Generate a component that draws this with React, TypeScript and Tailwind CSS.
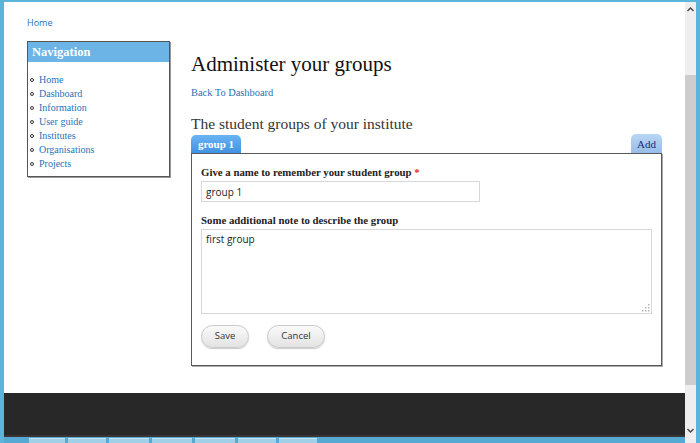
import React from "react";

const serif = "font-['Liberation_Serif','DejaVu_Serif',serif]";
const sans = "font-['Open_Sans','DejaVu_Sans',sans-serif]";

const navLinks = [
  "Home",
  "Dashboard",
  "Information",
  "User guide",
  "Institutes",
  "Organisations",
  "Projects",
];

function NavBlock() {
  return (
    <div className="w-[144px] h-[136px] border border-[#555] shadow-[1px_1px_0_#999] bg-white">
      <div
        className={`${serif} h-[20px] bg-[#6cb3e6] text-white font-bold text-[12.5px] leading-[20px] pl-[4px]`}
      >
        Navigation
      </div>
      <ul className={`${serif} mt-[11px] text-[10px] leading-[14px] text-[#1f73b7]`}>
        {navLinks.map((l) => (
          <li key={l} className="flex items-center">
            <span className="ml-[2px] mr-[5px] w-[4px] h-[4px] rounded-full border border-[#333]" />
            <a href="#">{l}</a>
          </li>
        ))}
      </ul>
    </div>
  );
}

function ResizeGrip() {
  return (
    <svg
      width="9"
      height="9"
      viewBox="0 0 9 9"
      className="absolute right-[2px] bottom-[2px]"
    >
      {[
        [7, 1],
        [4, 4],
        [7, 4],
        [1, 7],
        [4, 7],
        [7, 7],
      ].map(([x, y]) => (
        <rect key={`${x}-${y}`} x={x} y={y} width="1.5" height="1.5" fill="#b5b5b5" />
      ))}
    </svg>
  );
}

function GroupForm() {
  return (
    <div className="border border-[#5a5a5a] shadow-[1px_1px_0_#aaa] h-[213px] pt-[12px] px-[9px]">
      <label className={`${serif} block font-bold text-[10.8px] leading-[13px] text-[#222]`}>
        Give a name to remember your student group{" "}
        <span className="text-[#e0202a]">*</span>
      </label>
      <input
        defaultValue="group 1"
        className={`${sans} mt-[2px] block w-[279px] h-[21px] border border-[#d8d8d8] px-[4px] text-[10px] text-[#222] outline-none`}
      />
      <label
        className={`${serif} block mt-[12px] font-bold text-[10.8px] leading-[13px] text-[#222]`}
      >
        Some additional note to describe the group
      </label>
      <div className="relative mt-[2px] w-[451px] h-[85px]">
        <textarea
          defaultValue="first group"
          className={`${sans} block w-full h-full border border-[#d8d8d8] px-[4px] py-[3px] text-[10px] leading-[13px] text-[#222] resize-none outline-none`}
        />
        <ResizeGrip />
      </div>
      <div className="flex gap-[18px] mt-[11px]">
        <button
          className={`${sans} h-[23px] w-[48px] rounded-full border border-[#c9c9c9] bg-gradient-to-b from-[#fafafa] to-[#e3e3e3] text-[9.5px] text-[#333] shadow-[0_1px_1px_#ccc]`}
        >
          Save
        </button>
        <button
          className={`${sans} h-[23px] w-[58px] rounded-full border border-[#c9c9c9] bg-gradient-to-b from-[#fafafa] to-[#e3e3e3] text-[9.5px] text-[#333] shadow-[0_1px_1px_#ccc]`}
        >
          Cancel
        </button>
      </div>
    </div>
  );
}

function MainContent() {
  return (
    <div className="flex-1 ml-[21px] mr-[23px]">
      <h1 className={`${serif} text-[21px] leading-[24px] text-[#111] mt-[11px]`}>
        Administer your groups
      </h1>
      <a
        href="#"
        className={`${serif} block mt-[10px] text-[10.4px] leading-[13px] text-[#1f73b7]`}
      >
        Back To Dashboard
      </a>
      <h2 className={`${serif} mt-[16px] text-[15.5px] leading-[18px] text-[#333]`}>
        The student groups of your institute
      </h2>
      <div className="flex items-end justify-between mt-[1px] h-[19px]">
        <div
          className={`${serif} h-[18px] w-[50px] rounded-t-[5px] bg-gradient-to-b from-[#6ab3f2] to-[#3f93e2] text-white font-bold text-[11px] leading-[18px] text-center`}
        >
          group 1
        </div>
        <div
          className={`${serif} h-[19px] w-[31px] rounded-t-[5px] bg-gradient-to-b from-[#b8d6f4] to-[#98bee8] text-[#1b2a7a] text-[11px] leading-[20px] text-center`}
        >
          Add
        </div>
      </div>
      <GroupForm />
    </div>
  );
}

function Scrollbar() {
  return (
    <div className="w-[11px] bg-[#eeeeee] flex flex-col items-center">
      <div className="h-[14px] flex items-center justify-center">
        <svg width="7" height="5" viewBox="0 0 7 5">
          <path d="M0.5 4 L3.5 1 L6.5 4" stroke="#444" strokeWidth="1.4" fill="none" />
        </svg>
      </div>
      <div className="h-[59px]" />
      <div className="w-full h-[310px] bg-[#cdcdcd]" />
      <div className="flex-1" />
      <div className="h-[14px] flex items-center justify-center">
        <svg width="7" height="5" viewBox="0 0 7 5">
          <path d="M0.5 1 L3.5 4 L6.5 1" stroke="#444" strokeWidth="1.4" fill="none" />
        </svg>
      </div>
      <div className="h-[6px]" />
    </div>
  );
}

function Taskbar() {
  return (
    <div className="h-[6px] bg-[#56a9d2] flex items-end gap-[3px] pl-[25px]">
      {[36, 38, 40, 40, 40, 38, 38].map((w, i) => (
        <div key={i} className="h-[5px] bg-[#9fd0e8] border-t border-[#c6e5f3]" style={{ width: w }} />
      ))}
    </div>
  );
}

export default function App() {
  return (
    <div className="w-[700px] h-[443px] bg-[#5ab4dc] flex flex-col overflow-hidden">
      <div className="h-[2px]" />
      <div className="flex flex-1 min-h-0">
        <div className="w-[4px]" />
        <div className="flex-1 flex flex-col bg-white min-w-0">
          <div className="flex-1">
            <div className="pl-[23px] pt-[14px] h-[18px] -mt-[8px]">
              <a href="#" className={`${sans} text-[9px] leading-[12px] text-[#1f73b7]`}>
                Home
              </a>
            </div>
            <div className="flex mt-[29px] pl-[23px]">
              <NavBlock />
              <MainContent />
            </div>
          </div>
          <div className="h-[44px] bg-[#282828] border-b-[2px] border-[#3a3434]" />
          <Taskbar />
        </div>
        <Scrollbar />
        <div className="w-[4px]" />
      </div>
    </div>
  );
}
